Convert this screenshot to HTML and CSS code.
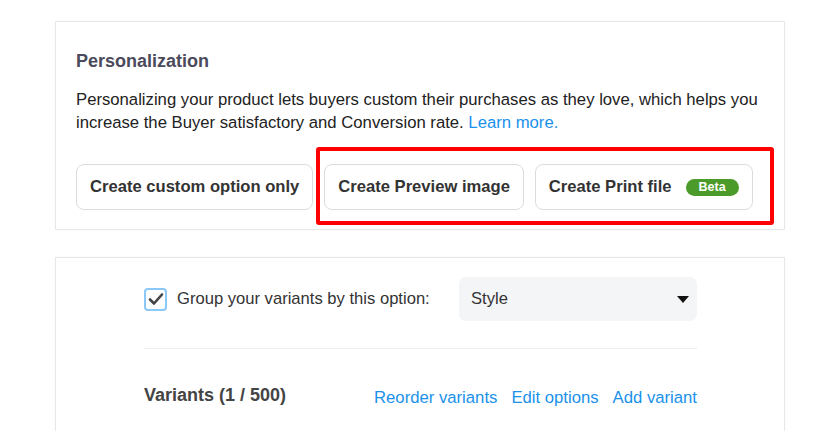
FILE: index.html
```html
<!DOCTYPE html>
<html>
<head>
<meta charset="utf-8">
<link rel="stylesheet" href="styles.css">
</head>
<body>
<div class="page">
  <section class="card card-personal">
    <h2 class="title">Personalization</h2>
    <p class="desc">Personalizing your product lets buyers custom their purchases as they love, which helps you increase the Buyer satisfactory and Conversion rate. <a class="link" href="#">Learn more.</a></p>
    <div class="btn-row">
      <button class="btn">Create custom option only</button>
      <button class="btn">Create Preview image</button>
      <button class="btn">Create Print file <span class="beta">Beta</span></button>
      <div class="highlight"></div>
    </div>
  </section>
  <section class="card card-variants">
    <div class="group-row">
      <label class="check-label">
        <span class="checkbox">
          <svg width="16" height="14" viewBox="0 0 16 14"><path d="M2 7.5 L6 11.5 L14 2.5" fill="none" stroke="#444" stroke-width="2.6" stroke-linecap="round" stroke-linejoin="round"/></svg>
        </span>
        Group your variants by this option:
      </label>
      <div class="select">
        <span>Style</span>
        <svg width="12" height="7" viewBox="0 0 12 7"><path d="M0 0 L12 0 L6 7 Z" fill="#111"/></svg>
      </div>
    </div>
    <div class="divider"></div>
    <div class="variants-row">
      <span class="variants-title">Variants (1 / 500)</span>
      <div class="actions">
        <a class="link" href="#">Reorder variants</a>
        <a class="link" href="#">Edit options</a>
        <a class="link" href="#">Add variant</a>
      </div>
    </div>
  </section>
</div>
</body>
</html>
```
FILE: styles.css
```css
* { box-sizing: border-box; }
html, body {
  margin: 0;
  padding: 0;
  background: #fff;
  height: 100%;
  overflow: hidden;
}
body {
  font-family: "Liberation Sans", Arial, sans-serif;
  color: #333;
}
.page {
  width: 730px;
  margin-left: 55px;
  padding-top: 21px;
  display: flex;
  flex-direction: column;
  gap: 27px;
}
.card {
  border: 1px solid #e8e8e8;
  background: #fff;
  box-shadow: 0 0 2px rgba(0,0,0,0.04);
}
.card-personal {
  padding: 28px 20px 19px 20px;
}
.title {
  margin: 0;
  font-size: 18px;
  font-weight: bold;
  color: #4a4a5c;
  line-height: 22px;
}
.desc {
  margin: 16px 0 0 0;
  font-size: 16.7px;
  line-height: 23px;
  color: #222;
}
.link {
  color: #1a91eb;
  text-decoration: none;
}
.btn-row {
  position: relative;
  display: flex;
  gap: 11px;
  margin-top: 30px;
}
.btn {
  height: 46px;
  padding: 0 13px;
  border: 1px solid #dcdcdc;
  border-radius: 8px;
  background: #fff;
  font-family: "Liberation Sans", Arial, sans-serif;
  font-size: 16.6px;
  font-weight: bold;
  color: #333;
  display: flex;
  align-items: center;
  gap: 14px;
}
.beta {
  display: inline-block;
  background: #4b9b2a;
  color: #fff;
  font-size: 12.5px;
  font-weight: bold;
  line-height: 17px;
  padding: 0 13px;
  border-radius: 9px;
}
.highlight {
  position: absolute;
  left: 240px;
  top: -17px;
  width: 458px;
  height: 78px;
  border: 4px solid #f00;
  border-radius: 3px;
  pointer-events: none;
}
.card-variants {
  padding: 19px 87px 30px 88px;
}
.group-row {
  display: flex;
  align-items: center;
  justify-content: space-between;
}
.check-label {
  display: flex;
  align-items: center;
  gap: 10px;
  font-size: 16.6px;
  color: #333;
}
.checkbox {
  width: 23px;
  height: 23px;
  border: 2px solid #8ac8f7;
  border-radius: 4px;
  display: flex;
  align-items: center;
  justify-content: center;
}
.select {
  width: 238px;
  height: 44px;
  background: #f4f5f7;
  border-radius: 7px;
  display: flex;
  align-items: center;
  justify-content: space-between;
  padding: 0 8px 0 12px;
  font-size: 16.6px;
  color: #333;
}
.divider {
  height: 1px;
  background: #eeeef2;
  margin-top: 27px;
}
.variants-row {
  display: flex;
  align-items: center;
  justify-content: space-between;
  margin-top: 33px;
}
.variants-title {
  font-size: 18px;
  font-weight: bold;
  color: #444;
}
.actions {
  display: flex;
  gap: 14px;
  font-size: 16.7px;
  padding-top: 6px;
}
```
